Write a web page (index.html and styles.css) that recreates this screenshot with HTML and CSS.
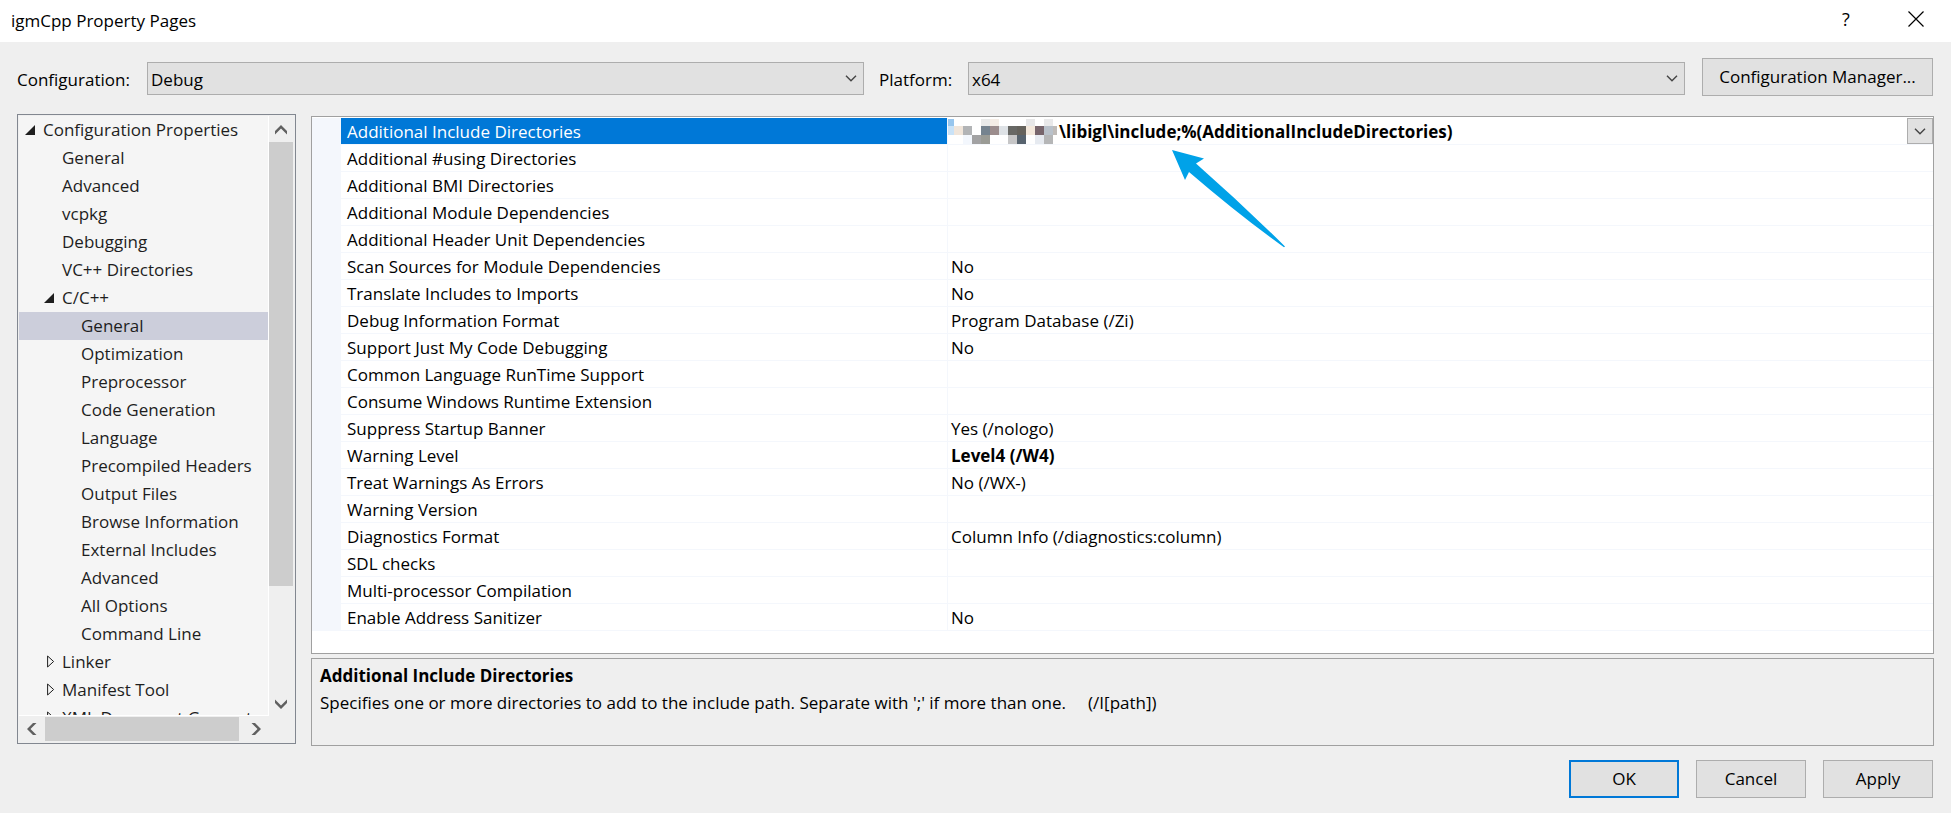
FILE: index.html
```html
<!DOCTYPE html>
<html lang="en">
<head>
<meta charset="utf-8">
<title>igmCpp Property Pages</title>
<link rel="stylesheet" href="styles.css">
</head>
<body>
<div class="dialog">
  <header class="titlebar">
    <h1 class="title">igmCpp Property Pages</h1>
    <button class="caption-btn help" type="button" aria-label="Help">?</button>
    <button class="caption-btn" type="button" aria-label="Close"><svg width="16" height="16" viewBox="0 0 16 16"><path d="M.5.5l15 15M15.5.5l-15 15" fill="none" stroke="#000" stroke-width="1.2"/></svg></button>
  </header>

  <div class="config">
    <label class="config-label" for="configuration">Configuration:</label>
    <div class="combo">
      <select id="configuration"><option>Debug</option></select>
      <svg class="chevron" width="12" height="7" viewBox="0 0 12 7"><path d="M1 .8l5 5 5-5"/></svg>
    </div>
    <label class="platform-label" for="platform">Platform:</label>
    <div class="combo">
      <select id="platform"><option>x64</option></select>
      <svg class="chevron" width="12" height="7" viewBox="0 0 12 7"><path d="M1 .8l5 5 5-5"/></svg>
    </div>
    <button class="btn manager" type="button">Configuration Manager...</button>
  </div>

  <main class="main">
    <nav class="tree" aria-label="Property pages">
      <ul class="nodes">
        <li><span class="node open">Configuration Properties</span>
          <ul>
            <li><span class="node">General</span></li>
            <li><span class="node">Advanced</span></li>
            <li><span class="node">vcpkg</span></li>
            <li><span class="node">Debugging</span></li>
            <li><span class="node">VC++ Directories</span></li>
            <li><span class="node open">C/C++</span>
              <ul>
                <li class="selected"><span class="node">General</span></li>
                <li><span class="node">Optimization</span></li>
                <li><span class="node">Preprocessor</span></li>
                <li><span class="node">Code Generation</span></li>
                <li><span class="node">Language</span></li>
                <li><span class="node">Precompiled Headers</span></li>
                <li><span class="node">Output Files</span></li>
                <li><span class="node">Browse Information</span></li>
                <li><span class="node">External Includes</span></li>
                <li><span class="node">Advanced</span></li>
                <li><span class="node">All Options</span></li>
                <li><span class="node">Command Line</span></li>
              </ul>
            </li>
            <li><span class="node"><svg class="closed" width="8" height="13" viewBox="0 0 8 13"><path d="M.6 1v11l6-5.500z"/></svg>Linker</span></li>
            <li><span class="node"><svg class="closed" width="8" height="13" viewBox="0 0 8 13"><path d="M.6 1v11l6-5.500z"/></svg>Manifest Tool</span></li>
            <li><span class="node"><svg class="closed" width="8" height="13" viewBox="0 0 8 13"><path d="M.6 1v11l6-5.500z"/></svg>XML Document Generator</span></li>
          </ul>
        </li>
      </ul>
      <div class="vscroll">
        <button class="scroll-btn" type="button" aria-label="Scroll up"><svg width="12" height="10" viewBox="0 0 12 10"><path d="M0 6l6-6 6 6v3.500l-6-6-6 6z"/></svg></button>
        <div class="track"><div class="thumb"></div></div>
        <button class="scroll-btn" type="button" aria-label="Scroll down"><svg width="12" height="10" viewBox="0 0 12 10"><path d="M0 4l6 6 6-6V.5l-6 6-6-6z"/></svg></button>
      </div>
      <div class="hscroll">
        <button class="scroll-btn" type="button" aria-label="Scroll left"><svg width="10" height="12" viewBox="0 0 10 12"><path d="M6 0L0 6l6 6h3.500l-6-6 6-6z"/></svg></button>
        <div class="track"><div class="thumb"></div></div>
        <button class="scroll-btn" type="button" aria-label="Scroll right"><svg width="10" height="12" viewBox="0 0 10 12"><path d="M4 0l6 6-6 6H.5l6-6-6-6z"/></svg></button>
      </div>
    </nav>

    <div class="content">
      <div class="grid-pane">
        <table class="grid">
          <colgroup><col class="gutter"><col class="names"><col></colgroup>
          <tbody>
            <tr class="current"><td></td><th scope="row">Additional Include Directories</th><td>
              <div class="editor">
                <svg class="mosaic" width="109" height="26" viewBox="0 0 109 26" shape-rendering="crispEdges">
                  <path fill="#97c6ee" d="M0 1h6v7H0z"/><path fill="#c9e2f7" d="M0 8h6v9H0z"/>
                  <path fill="#f0e5da" d="M6 8h9v9H6z"/><path fill="#b2b4b6" d="M15 8h9v9h-9z"/>
                  <path fill="#f3f7fd" d="M15 17h9v9h-9z"/><path fill="#a2a2a3" d="M24 17h9v9h-9z"/>
                  <path fill="#e9eaea" d="M33 1h9v7h-9z"/><path fill="#75838f" d="M33 8h9v9h-9z"/>
                  <path fill="#9a9b95" d="M33 17h9v9h-9z"/><path fill="#f5ede6" d="M42 1h9v7h-9z"/>
                  <path fill="#9c8d8d" d="M42 8h9v9h-9z"/><path fill="#dee2e6" d="M51 8h9v9h-9z"/>
                  <path fill="#686865" d="M60 8h9v9h-9z"/><path fill="#c6c6c7" d="M60 17h9v9h-9z"/>
                  <path fill="#65625c" d="M69 8h9v9h-9z"/><path fill="#57636e" d="M69 17h9v9h-9z"/>
                  <path fill="#e7e7e8" d="M78 1h9v7h-9z"/><path fill="#f3e8dc" d="M78 8h9v9h-9z"/>
                  <path fill="#77656c" d="M87 8h9v9h-9z"/><path fill="#e6eaf0" d="M87 17h9v9h-9z"/>
                  <path fill="#e9e9ea" d="M96 1h9v7h-9z"/><path fill="#b9c1ca" d="M96 8h9v9h-9z"/>
                  <path fill="#b5b6b7" d="M96 17h9v9h-9z"/><path fill="#bfbbb8" d="M105 8h4v9h-4z"/>
                </svg>
                <span class="path">\libigl\include;%(AdditionalIncludeDirectories)</span>
                <button class="drop" type="button" aria-label="Edit value"><svg class="chevron-icon" width="12" height="7" viewBox="0 0 12 7"><path d="M1 .8l5 5 5-5"/></svg></button>
                <svg class="pointer" width="116" height="100" viewBox="0 0 116 100"><path fill="#00a2e8" d="M0 0l32 8.500-8 5Q70 54 113 96.500l-1 .8Q67 65 17 22l-4 8z"/></svg>
              </div></td></tr>
            <tr><td></td><th scope="row">Additional #using Directories</th><td></td></tr>
            <tr><td></td><th scope="row">Additional BMI Directories</th><td></td></tr>
            <tr><td></td><th scope="row">Additional Module Dependencies</th><td></td></tr>
            <tr><td></td><th scope="row">Additional Header Unit Dependencies</th><td></td></tr>
            <tr><td></td><th scope="row">Scan Sources for Module Dependencies</th><td>No</td></tr>
            <tr><td></td><th scope="row">Translate Includes to Imports</th><td>No</td></tr>
            <tr><td></td><th scope="row">Debug Information Format</th><td>Program Database (/Zi)</td></tr>
            <tr><td></td><th scope="row">Support Just My Code Debugging</th><td>No</td></tr>
            <tr><td></td><th scope="row">Common Language RunTime Support</th><td></td></tr>
            <tr><td></td><th scope="row">Consume Windows Runtime Extension</th><td></td></tr>
            <tr><td></td><th scope="row">Suppress Startup Banner</th><td>Yes (/nologo)</td></tr>
            <tr><td></td><th scope="row">Warning Level</th><td><b>Level4 (/W4)</b></td></tr>
            <tr><td></td><th scope="row">Treat Warnings As Errors</th><td>No (/WX-)</td></tr>
            <tr><td></td><th scope="row">Warning Version</th><td></td></tr>
            <tr><td></td><th scope="row">Diagnostics Format</th><td>Column Info (/diagnostics:column)</td></tr>
            <tr><td></td><th scope="row">SDL checks</th><td></td></tr>
            <tr><td></td><th scope="row">Multi-processor Compilation</th><td></td></tr>
            <tr><td></td><th scope="row">Enable Address Sanitizer</th><td>No</td></tr>
          </tbody>
        </table>
      </div>
      <section class="help-pane">
        <h2 class="help-title">Additional Include Directories</h2>
        <p class="help-text">Specifies one or more directories to add to the include path. Separate with ';' if more than one.     (/I[path])</p>
      </section>
    </div>
  </main>

  <footer class="actions">
    <button class="btn primary" type="button">OK</button>
    <button class="btn" type="button">Cancel</button>
    <button class="btn" type="button">Apply</button>
  </footer>
</div>
</body>
</html>
```
FILE: styles.css
```css
* { box-sizing: border-box; }

body {
  margin: 0;
  background: #efefef;
  color: #000;
  font: 17px/26px "Open Sans", "Noto Sans", sans-serif;
}

button, select {
  font: inherit;
  color: inherit;
  border-radius: 0;
}

svg { display: block; }

/* Title bar */
.titlebar {
  display: flex;
  height: 42px;
  padding-left: 11px;
  background: #fff;
}

.title {
  flex: 1;
  margin: 0;
  font-size: 17px;
  font-weight: 400;
  line-height: 42px;
}

.caption-btn {
  display: flex;
  align-items: center;
  justify-content: center;
  width: 70px;
  padding: 0 0 4px;
  border: 0;
  background: none;
}

.help { font-size: 18px; }

/* Configuration row */
.config {
  display: flex;
  align-items: flex-start;
  padding: 16px 18px 0 17px;
}

.config label {
  padding-top: 8px;
  line-height: 28px;
}

.config-label { width: 130px; }

.config .platform-label {
  width: 104px;
  padding-left: 15px;
}

.combo {
  position: relative;
  flex: 1;
  padding-top: 4px;
}

.combo select {
  display: block;
  width: 100%;
  height: 33px;
  padding: 2px 24px 0 3px;
  border: 1px solid #adadad;
  background: #e1e1e1;
  appearance: none;
}

.chevron {
  position: absolute;
  top: 17px;
  right: 7px;
  pointer-events: none;
}

.chevron path, .chevron-icon path {
  fill: none;
  stroke: #444;
  stroke-width: 1.4;
}

.btn {
  width: 110px;
  height: 38px;
  padding: 0;
  border: 1px solid #adadad;
  background: #e1e1e1;
}

.manager {
  width: 231px;
  margin-left: 17px;
}

.primary { border: 2px solid #0078d7; }

/* Main area */
.main {
  display: flex;
  align-items: flex-start;
  gap: 15px;
  padding: 18px 17px 0;
}

.tree {
  display: grid;
  grid-template: minmax(0, 1fr) 26px / minmax(0, 1fr) 25px;
  width: 279px;
  height: 630px;
  border: 1px solid #828790;
  padding: 1px;
  color: #1e1e1e;
}

.tree ul {
  margin: 0;
  padding: 0;
  list-style: none;
}

.tree .nodes {
  overflow: hidden;
  border: solid #fff;
  border-width: 0 1px 1px 0;
  background: #f5f5f5;
}

.node {
  display: block;
  position: relative;
  padding-left: 24px;
  line-height: 28px;
  white-space: nowrap;
}

.nodes ul .node { padding-left: 43px; }
.nodes ul ul .node { padding-left: 62px; }
.selected { background: #cccedb; }

.open::before {
  content: "";
  position: absolute;
  top: 9px;
  right: calc(100% - 16px);
  border: solid transparent;
  border-width: 0 0 10px 10px;
  border-bottom-color: #1e1e1e;
}

.nodes ul .open::before { right: calc(100% - 35px); }

.closed {
  position: absolute;
  top: 7px;
  left: 28px;
}

.closed path {
  fill: none;
  stroke: #1e1e1e;
}

.vscroll, .hscroll {
  display: flex;
  background: #efefef;
}

.vscroll {
  flex-direction: column;
  grid-row: 1 / 3;
  grid-column: 2;
  padding: 0 1px 26px 0;
}

.hscroll {
  grid-row: 2;
  grid-column: 1;
  padding: 1px 0;
}

.track { flex: 1; }
.thumb { background: #cdcdcd; }

.vscroll .thumb { height: 81%; }

.hscroll .thumb {
  width: 98%;
  height: 100%;
}

.scroll-btn {
  display: flex;
  flex: 0 0 26px;
  align-items: center;
  justify-content: center;
  padding: 0;
  border: 0;
  background: none;
}

.vscroll .scroll-btn { padding-top: 2px; }
.scroll-btn path { fill: #606060; }

/* Property grid */
.content {
  flex: 1;
  min-width: 0;
  padding-top: 2px;
}

.grid-pane {
  height: 538px;
  margin-bottom: 4px;
  padding-top: 1px;
  border: 1px solid #a0a0a0;
  background: #fff;
}

.grid {
  width: 100%;
  border-collapse: separate;
  border-spacing: 0;
  table-layout: fixed;
}

.gutter { width: 29px; }
.names { width: 607px; }

.grid th, .grid td {
  height: 27px;
  padding: 2px 0 0 3px;
  border-bottom: 1px solid #f4f7fc;
  font-weight: 400;
  line-height: 24px;
  text-align: left;
  white-space: nowrap;
}

.grid th {
  padding-left: 6px;
  border-right: 1px solid #f4f7fc;
}

.grid td:first-child { background: #f4f7fc; }

.grid .current th {
  background: #0078d7;
  background-clip: padding-box;
  color: #fff;
}

.grid .current td { padding: 0; }

.editor {
  display: flex;
  position: relative;
  height: 26px;
}

.path {
  flex: 1;
  padding: 2px 0 0 2px;
  font-weight: 700;
}

.drop {
  display: flex;
  align-items: center;
  justify-content: center;
  width: 26px;
  padding: 0;
  border: 1px solid #adadad;
  background: #e1e1e1;
}

.pointer {
  position: absolute;
  top: 32px;
  left: 224px;
}

.help-pane {
  height: 88px;
  padding: 3px 8px;
  border: 1px solid #a0a0a0;
}

.help-title, .help-text {
  margin: 0;
  font-size: 17px;
  line-height: 27px;
}

.help-text { white-space: pre-wrap; }

/* Dialog buttons */
.actions {
  display: flex;
  justify-content: flex-end;
  gap: 17px;
  padding: 14px 18px;
}
```
